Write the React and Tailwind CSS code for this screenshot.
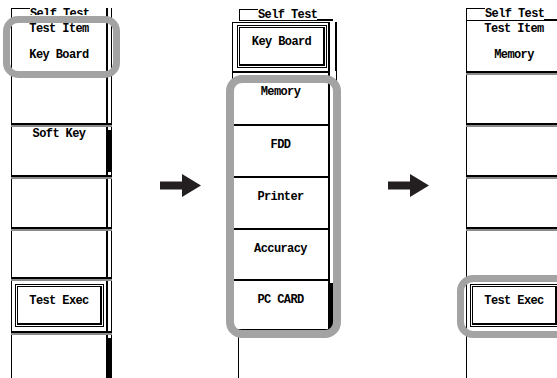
import React from "react";

const SEP = "h-1 shrink-0 border-t-2 border-black bg-[#8c8c8c]";

function Arrow({ className }) {
  return (
    <svg className={className} width="41" height="23" viewBox="0 0 41 23">
      <path d="M0 7.5H22V0L41 11.5L22 23V15.5H0Z" fill="#231f20" />
    </svg>
  );
}

function Btn({ children, className }) {
  return (
    <div className={`border border-black p-px ${className}`}>
      <div className="h-full border-t border-l border-r-2 border-b-2 border-black flex justify-center pt-[7px]">
        {children}
      </div>
    </div>
  );
}

// one row of a soft key column: key cell + the narrow strip on its right
function Cells({ h, bar, children }) {
  return (
    <div className={`flex ${h}`}>
      <div className="w-[97px] shrink-0 border-l border-r-2 border-black">{children}</div>
      <div className="flex-1 border-r border-black flex flex-col">
        {bar && <div className={`flex-1 bg-black ${bar}`} />}
      </div>
    </div>
  );
}

function Tab({ clip }) {
  return (
    <div className="flex h-[13px] border-b border-black">
      <div className="w-[18px] border-t border-black" />
      <div className={clip ? "h-[7px] overflow-hidden leading-[12px]" : "leading-[12px]"}>
        Self Test
      </div>
      <div className="flex-1 border-b border-black" />
    </div>
  );
}

function KeyPanel({ clip, item, softKey, className }) {
  return (
    <div className={`w-[101px] shrink-0 flex flex-col h-[370px] ${className}`}>
      <Cells h="h-[63px]">
        <Tab clip={clip} />
        <div className="mt-px text-center">Test Item</div>
        <div className="mt-[12px] text-center">{item}</div>
      </Cells>
      <div className={SEP} />
      <Cells h="h-[48px]" />
      <div className={SEP} />
      <Cells h="h-[48px]" bar={softKey ? "my-[3px]" : null}>
        {softKey && <div className="text-center">Soft Key</div>}
      </Cells>
      <div className={SEP} />
      <Cells h="h-[48px]" />
      <div className={SEP} />
      <Cells h="h-[46px]" />
      <div className={SEP} />
      <Cells h="h-[50px]">
        <Btn className="mt-[3px] ml-[3px] mr-[2px] h-[43px]">Test Exec</Btn>
      </Cells>
      <div className={SEP} />
      <div className="flex flex-1">
        <div className="w-[97px] shrink-0 border-l border-r-2 border-black" />
        <div className="flex-1 border-r border-black flex flex-col">
          <div className="flex-1 bg-black mt-[3px]" />
        </div>
      </div>
    </div>
  );
}

function MenuRow({ h, label, bar }) {
  return (
    <div className={`flex ${h}`}>
      <div className="w-[98px] shrink-0 border-l border-r-2 border-t-2 border-black pt-[12px] text-center">
        {label}
      </div>
      <div className="flex-1 border-r border-black flex">
        {bar && <div className="w-[3px] bg-black mt-[4px]" />}
      </div>
    </div>
  );
}

export default function App() {
  return (
    <div className="relative w-[557px] h-[378px] overflow-hidden bg-white flex items-start text-black font-['Liberation_Mono',monospace] font-bold text-[12px] leading-[14px] tracking-[-0.6px]">
      {/* before */}
      <KeyPanel className="ml-[11px] mt-[8px]" clip item="Key Board" softKey />

      <Arrow className="ml-[48px] mt-[174px] shrink-0" />

      {/* Test Item menu */}
      <div className="ml-[31px] mt-[9px] w-[105px] shrink-0 flex flex-col h-[369px]">
        <div className="ml-[7px] w-[94px] h-[12px] flex border-l border-b border-black">
          <div className="w-[18px] border-t border-black" />
          <div className="leading-[12px]">Self Test</div>
          <div className="flex-1 border-b border-black" />
        </div>
        <div className="h-px" />
        <div className="flex h-[49px]">
          <div className="w-[98px] shrink-0 border-l border-r-2 border-t border-black">
            <Btn className="mt-[2px] ml-[4px] mr-px h-[43px]">Key Board</Btn>
          </div>
          <div className="flex-1 border-r-2 border-black" />
        </div>
        <MenuRow h="h-[53px]" label="Memory" />
        <MenuRow h="h-[52px]" label="FDD" />
        <MenuRow h="h-[52px]" label="Printer" />
        <MenuRow h="h-[51px]" label="Accuracy" />
        <MenuRow h="h-[50px]" label="PC CARD" bar />
        <div className="flex flex-1 border-t-2 border-black w-[98px]">
          <div className="ml-[6px] w-[92px] border-l border-black" />
        </div>
      </div>

      <Arrow className="ml-[51px] mt-[174px] shrink-0" />

      {/* after */}
      <KeyPanel className="ml-[37px] mt-[8px]" item="Memory" />

      {/* highlights */}
      <div className="absolute left-[3px] top-[16px] w-[117px] h-[62px] border-[7px] border-[#a3a3a3] rounded-[15px]" />
      <div className="absolute left-[226px] top-[75px] w-[115px] h-[263px] border-[8px] border-[#a3a3a3] rounded-[16px]" />
      <div className="absolute left-[457px] top-[275px] w-[130px] h-[63px] border-[7px] border-[#a3a3a3] rounded-[16px]" />
    </div>
  );
}
